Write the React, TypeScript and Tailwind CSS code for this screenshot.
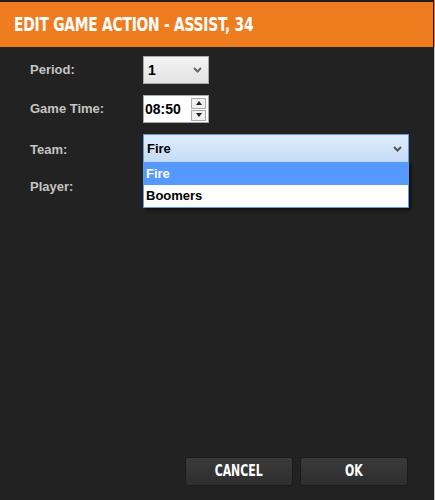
import React from "react";

const disp = { fontFamily: '"DejaVu Sans Condensed", "DejaVu Sans", sans-serif' };
const lab = { fontFamily: '"Liberation Sans", Arial, sans-serif' };

function Chevron({ color = "#666" }: { color?: string }) {
  return (
    <svg width="9" height="6" viewBox="0 0 9 6">
      <path d="M1 1 L4.5 4.5 L8 1" stroke={color} strokeWidth="2" fill="none" />
    </svg>
  );
}

export default function App() {
  return (
    <div className="w-[435px] h-[500px] bg-[#222222] flex overflow-hidden">
      <div className="w-[433px] h-full flex flex-col">
        <div className="h-[2px] bg-[#1e1e1e]" />
        <div className="h-[45px] bg-[#ef7c1f] flex items-center pl-[14px]">
          <span className="text-white text-[19px] font-bold tracking-[-0.3px] uppercase whitespace-nowrap inline-block scale-x-[0.81] origin-left" style={disp}>
            EDIT GAME ACTION - ASSIST, 34
          </span>
        </div>
        <div className="flex-1 relative flex flex-col">
          <div className="flex flex-col pt-[9px] pl-[30px] gap-[11px]">
            <div className="flex items-center h-[28px]">
              <span className="w-[113px] text-[#c4c4c4] text-[13px] font-bold" style={lab}>Period:</span>
              <div className="w-[66px] h-[28px] border border-[#a9a9a9] bg-gradient-to-b from-[#f4f4f4] to-[#e2e2e2] flex items-center justify-between pl-[4px] pr-[6px]">
                <span className="text-black text-[14px] font-bold" style={lab}>1</span>
                <Chevron />
              </div>
            </div>
            <div className="flex items-center h-[28px]">
              <span className="w-[113px] text-[#c4c4c4] text-[13px] font-bold" style={lab}>Game Time:</span>
              <div className="w-[66px] h-[28px] border border-[#a9a9a9] bg-white flex items-center justify-between pl-[1px] pr-[2px]">
                <span className="text-black text-[14px] font-bold" style={lab}>08:50</span>
                <div className="flex flex-col gap-[1px]">
                  <div className="w-[15px] h-[11px] border border-[#aaa] bg-[#f0f0f0] flex items-center justify-center">
                    <svg width="6" height="4" viewBox="0 0 6 4"><path d="M0 4 L3 0 L6 4 Z" fill="#222" /></svg>
                  </div>
                  <div className="w-[15px] h-[11px] border border-[#aaa] bg-[#f0f0f0] flex items-center justify-center">
                    <svg width="6" height="4" viewBox="0 0 6 4"><path d="M0 0 L3 4 L6 0 Z" fill="#222" /></svg>
                  </div>
                </div>
              </div>
            </div>
            <div className="flex items-start h-[28px]">
              <span className="w-[113px] text-[#c4c4c4] text-[13px] font-bold mt-[6px]" style={lab}>Team:</span>
              <div className="relative">
                <div className="w-[266px] h-[29px] border border-[#5b9bf0] bg-gradient-to-b from-[#e0ecfc] to-[#c6dbf6] flex items-center justify-between pl-[3px] pr-[6px]">
                  <span className="text-black text-[13px] font-bold" style={lab}>Fire</span>
                  <Chevron color="#555" />
                </div>
                <div className="absolute left-0 top-[28px] w-[266px] bg-white border border-[#5b9bf0] shadow-[2px_2px_3px_rgba(0,0,0,0.6)] z-10">
                  <div className="h-[22px] bg-[#5599ff] flex items-center pl-[2px] text-white text-[13px] font-bold" style={lab}>Fire</div>
                  <div className="h-[22px] bg-white flex items-center pl-[2px] text-black text-[13px] font-bold" style={lab}>Boomers</div>
                </div>
              </div>
            </div>
            <div className="flex items-center h-[28px]">
              <span className="w-[113px] text-[#c4c4c4] text-[13px] font-bold" style={lab}>Player:</span>
            </div>
          </div>
          <div className="mt-auto mb-[14px] flex justify-end gap-[7px] pr-[25px]">
            <button className="w-[108px] h-[29px] rounded-[3px] border border-[#1a1a1a] bg-gradient-to-b from-[#3a3a3a] to-[#2e2e2e] text-white text-[15px] font-bold flex items-center justify-center" style={disp}>
              <span className="inline-block scale-x-[0.81]">CANCEL</span>
            </button>
            <button className="w-[108px] h-[29px] rounded-[3px] border border-[#1a1a1a] bg-gradient-to-b from-[#3a3a3a] to-[#2e2e2e] text-white text-[15px] font-bold flex items-center justify-center" style={disp}>
              <span className="inline-block scale-x-[0.81]">OK</span>
            </button>
          </div>
        </div>
      </div>
      <div className="w-[1px] h-full bg-[#1a1a1a]" />
      <div className="w-[1px] h-full flex flex-col">
        <div className="h-[47px] bg-[#ef7c1f]" />
        <div className="flex-1 bg-[#c8c8c8]" />
      </div>
    </div>
  );
}
